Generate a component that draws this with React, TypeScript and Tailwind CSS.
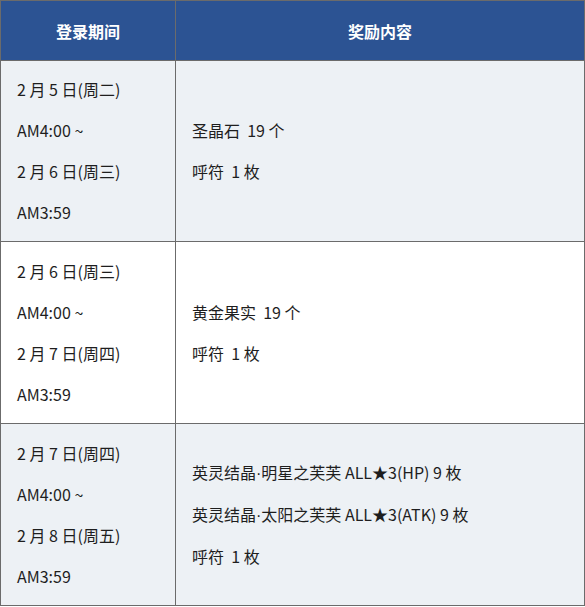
import React from "react";

const Dot = () => (
  <span style={{ fontFamily: '"Liberation Sans", sans-serif' }}>·</span>
);

const rows: { bg: string; h: string; left: string[]; right: React.ReactNode[] }[] = [
  {
    bg: "bg-[#edf1f5]",
    h: "h-[181px]",
    left: ["2 月 5 日(周二)", "AM4:00 ~", "2 月 6 日(周三)", "AM3:59"],
    right: ["圣晶石  19 个", "呼符  1 枚"],
  },
  {
    bg: "bg-white",
    h: "h-[182px]",
    left: ["2 月 6 日(周三)", "AM4:00 ~", "2 月 7 日(周四)", "AM3:59"],
    right: ["黄金果实  19 个", "呼符  1 枚"],
  },
  {
    bg: "bg-[#edf1f5]",
    h: "h-[182px]",
    left: ["2 月 7 日(周四)", "AM4:00 ~", "2 月 8 日(周五)", "AM3:59"],
    right: [
      <>英灵结晶<Dot />明星之芙芙 ALL★3(HP) 9 枚</>,
      <>英灵结晶<Dot />太阳之芙芙 ALL★3(ATK) 9 枚</>,
      "呼符  1 枚",
    ],
  },
];

export default function App() {
  return (
    <div
      className="w-[585px] h-[607px] bg-white text-[16px] text-[#1e1e1e]"
      style={{ fontFamily: '"Microsoft YaHei", "Noto Sans CJK SC", sans-serif' }}
    >
      <table className="w-[585px] border-collapse table-fixed">
        <colgroup>
          <col className="w-[175px]" />
          <col />
        </colgroup>
        <thead>
          <tr className="bg-[#2c5393] h-[60px]">
            <th className="border border-[#6b6b6b] text-white font-bold text-[16px] text-center">登录期间</th>
            <th className="border border-[#6b6b6b] text-white font-bold text-[16px] text-center">奖励内容</th>
          </tr>
        </thead>
        <tbody>
          {rows.map((r, i) => (
            <tr key={i} className={`${r.bg} ${r.h}`}>
              <td className="border border-[#6b6b6b] align-middle px-4 py-[8px]">
                {r.left.map((t, j) => (
                  <div key={j} className="leading-[41px] whitespace-pre">{t}</div>
                ))}
              </td>
              <td className="border border-[#6b6b6b] align-middle px-4 py-[8px]">
                {r.right.map((t, j) => (
                  <div key={j} className="leading-[41px] whitespace-pre">{t}</div>
                ))}
              </td>
            </tr>
          ))}
        </tbody>
      </table>
    </div>
  );
}
